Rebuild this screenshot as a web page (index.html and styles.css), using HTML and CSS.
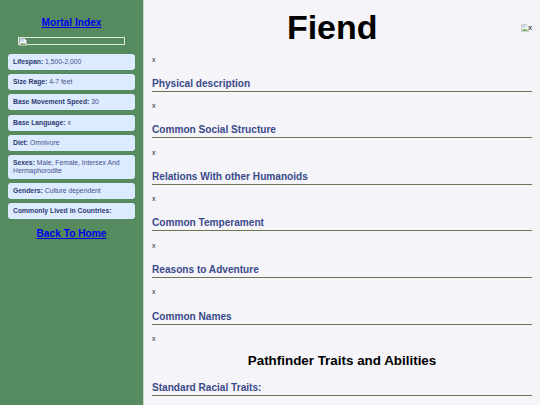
FILE: index.html
```html
<!DOCTYPE html>
<html lang="en">
<head>
    <meta charset="UTF-8">
    <title>Fiend</title>
    <link rel="stylesheet" href="styles.css">
</head>
<body>
    <div class="sidebar">
        <h2 class="side-title"><a href="#">Mortal Index</a></h2>
        <div class="side-image">
            <svg class="broken" width="8" height="8" viewBox="0 0 16 16">
                <path d="M1 1h10l4 4v10H1z" fill="#f4f4f4" stroke="#a8a8a8"/>
                <path d="M2 14l4-5 3 3 2-2 3 4z" fill="#6fae5a"/>
                <path d="M2 2h8v5H2z" fill="#c4d8f0"/>
            </svg>
        </div>
        <div class="card"><b>Lifespan:</b> 1,500-2,000</div>
        <div class="card"><b>Size Rage:</b> 4-7 feet</div>
        <div class="card"><b>Base Movement Speed:</b> 30</div>
        <div class="card"><b>Base Language:</b> x</div>
        <div class="card"><b>Diet:</b> Omnivore</div>
        <div class="card"><b>Sexes:</b> Male, Female, Intersex And Hermaphorodite</div>
        <div class="card"><b>Genders:</b> Culture dependent</div>
        <div class="card"><b>Commonly Lived in Countries:</b></div>
        <h2 class="side-home"><a href="#">Back To Home</a></h2>
    </div>

    <div class="main">
        <div class="header">
            <h1>Fiend</h1>
            <div class="portrait">
                <svg class="broken" width="8" height="8" viewBox="0 0 16 16">
                    <path d="M1 1h10l4 4v10H1z" fill="#f4f4f4" stroke="#a8a8a8"/>
                    <path d="M2 14l4-5 3 3 2-2 3 4z" fill="#6fae5a"/>
                    <path d="M2 2h8v5H2z" fill="#c4d8f0"/>
                </svg>x
            </div>
        </div>
        <p>x</p>
        <h3>Physical description</h3>
        <p>x</p>
        <h3>Common Social Structure</h3>
        <p>x</p>
        <h3>Relations With other Humanoids</h3>
        <p>x</p>
        <h3>Common Temperament</h3>
        <p>x</p>
        <h3>Reasons to Adventure</h3>
        <p>x</p>
        <h3>Common Names</h3>
        <p>x</p>
        <h2>Pathfinder Traits and Abilities</h2>
        <h3>Standard Racial Traits:</h3>
    </div>
</body>
</html>
```

FILE: styles.css
```css
body {
    margin: 0;
    height: 405px;
    overflow: hidden;
    display: flex;
    background: #f4f4f9;
    font-family: "Liberation Sans", Arial, sans-serif;
}

.sidebar {
    width: 144px;
    height: 405px;
    flex-shrink: 0;
    box-sizing: border-box;
    padding: 0 8px;
    background: #558b5f;
    border-right: 1px solid #c8d4ca;
}

.side-title {
    margin: 16px 0 0;
    font-size: 10.2px;
    line-height: 13px;
    text-align: center;
}

.side-title a,
.side-home a {
    color: #0000ee;
}

.side-image {
    display: flex;
    width: 107px;
    height: 8px;
    box-sizing: border-box;
    margin: 8px 0 9px 10px;
    border: 1px solid #dfe8df;
}

.card {
    margin-bottom: 4.2px;
    padding: 4px 5px;
    border-radius: 3px;
    background: #dcebff;
    color: #45508a;
    font-size: 6.8px;
    line-height: 8px;
}

.card b {
    color: #2f3a70;
}

.side-home {
    margin: 7.4px 0 0;
    font-size: 10.2px;
    line-height: 13px;
    text-align: center;
}

.main {
    flex: 1;
    padding: 0 8px;
    min-width: 0;
}

.header {
    display: flex;
    align-items: flex-start;
    gap: 8px;
    height: 55.5px;
}

h1 {
    flex: 1;
    margin: 0;
    font-size: 34px;
    line-height: 54px;
    text-align: center;
    color: #000;
}

.portrait {
    display: flex;
    align-items: center;
    margin-top: 24px;
    font-size: 7px;
    line-height: 8px;
    color: #000;
}

p {
    margin: 0;
    height: 8px;
    font-size: 7px;
    line-height: 8px;
    color: #222;
}

h3 {
    margin: 13.2px 0 10.4px;
    padding-bottom: 1px;
    border-bottom: 1px solid #6b7650;
    font-size: 10.1px;
    line-height: 13px;
    color: #3b4a8a;
}

h2 {
    margin: 10px 0 0;
    font-size: 13.4px;
    line-height: 16px;
    text-align: center;
    color: #000;
}

h2 + h3 {
    margin-top: 12.5px;
}
```
